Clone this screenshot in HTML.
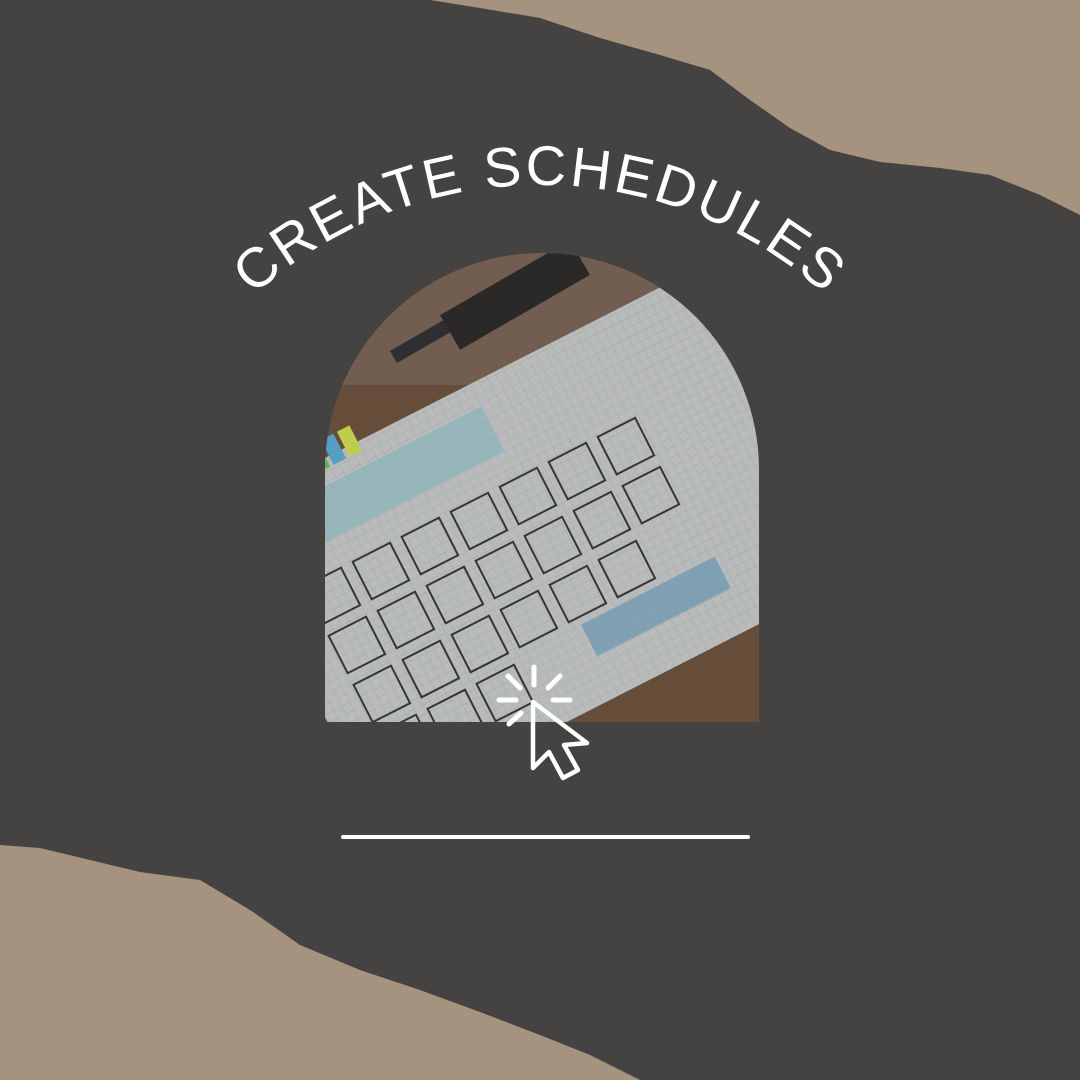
<!DOCTYPE html>
<html><head><meta charset="utf-8"><style>
html,body{margin:0;padding:0;background:#454341;}
svg{display:block}
</style></head><body>
<svg width="1080" height="1080" viewBox="0 0 1080 1080" xmlns="http://www.w3.org/2000/svg">
<defs>
<clipPath id="arch"><path d="M325 722 V470 A217 217 0 0 1 759 470 V722 Z"/></clipPath>
<pattern id="grid" width="9" height="9" patternUnits="userSpaceOnUse"><path d="M9 0V9H0" fill="none" stroke="#9aa6ab" stroke-width="0.7"/></pattern>
<path id="arc" d="M114 611 A426 426 0 0 1 966 611"/>
</defs>
<rect width="1080" height="1080" fill="#454341"/>
<path d="M430 0 H1080 V215 L1040 195 L990 175 L940 168 L880 162 L830 150 L790 128 L750 100 L710 70 L660 55 L600 38 L540 18 L480 8 Z" fill="#a5937f"/>
<path d="M0 845 L40 848 L90 860 L140 872 L200 880 L250 910 L300 945 L360 970 L420 990 L480 1012 L540 1035 L590 1055 L640 1080 H0 Z" fill="#a5937f"/>
<g clip-path="url(#arch)">
<rect x="320" y="245" width="445" height="485" fill="#6e5038"/>
<rect x="320" y="245" width="445" height="140" fill="#7d6554"/>
<g transform="rotate(-27 540 500)">
<rect x="250" y="365" width="580" height="345" fill="#d3d6d6"/>
<rect x="250" y="365" width="580" height="345" fill="url(#grid)" opacity="0.6"/>
<rect x="330" y="390" width="200" height="50" fill="#8fcbd6" opacity="0.6"/>
<g fill="none" stroke="#333" stroke-width="2">
<rect x="290" y="470" width="42" height="42"/><rect x="345" y="470" width="42" height="42"/><rect x="400" y="470" width="42" height="42"/><rect x="455" y="470" width="42" height="42"/><rect x="510" y="470" width="42" height="42"/><rect x="565" y="470" width="42" height="42"/><rect x="620" y="470" width="42" height="42"/>
<rect x="290" y="525" width="42" height="42"/><rect x="345" y="525" width="42" height="42"/><rect x="400" y="525" width="42" height="42"/><rect x="455" y="525" width="42" height="42"/><rect x="510" y="525" width="42" height="42"/><rect x="565" y="525" width="42" height="42"/><rect x="620" y="525" width="42" height="42"/>
<rect x="290" y="580" width="42" height="42"/><rect x="345" y="580" width="42" height="42"/><rect x="400" y="580" width="42" height="42"/><rect x="455" y="580" width="42" height="42"/><rect x="510" y="580" width="42" height="42"/><rect x="565" y="580" width="42" height="42"/>
<rect x="290" y="635" width="42" height="42"/><rect x="345" y="635" width="42" height="42"/><rect x="400" y="635" width="42" height="42"/>
</g>
<rect x="520" y="630" width="150" height="35" fill="#6fa8c8" opacity="0.7"/>
<rect x="300" y="347" width="14" height="28" fill="#d8e84a"/><rect x="318" y="347" width="14" height="28" fill="#f0823a"/><rect x="336" y="347" width="14" height="28" fill="#e8468c"/><rect x="354" y="347" width="14" height="28" fill="#5cd055"/><rect x="372" y="347" width="14" height="28" fill="#5ab4e0"/><rect x="390" y="347" width="14" height="28" fill="#d8ec50"/>
</g>
<rect x="380" y="300" width="200" height="14" fill="#2a2a30" transform="rotate(-30 480 307)"/>
<rect x="440" y="275" width="150" height="40" fill="#262422" transform="rotate(-30 515 295)"/>
<rect x="320" y="245" width="445" height="485" fill="#454341" opacity="0.18"/>
</g>
<text font-family="Liberation Sans, sans-serif" font-size="56" fill="#fff" letter-spacing="3"><textPath href="#arc" startOffset="50%" text-anchor="middle">CREATE SCHEDULES</textPath></text>
<g stroke="#fff" stroke-width="5" stroke-linecap="round" fill="none">
<line x1="534" y1="667" x2="534" y2="685"/>
<line x1="508" y1="676" x2="520" y2="688"/>
<line x1="560" y1="676" x2="548" y2="688"/>
<line x1="499" y1="700" x2="516" y2="700"/>
<line x1="553" y1="700" x2="570" y2="700"/>
<line x1="509" y1="724" x2="521" y2="713"/>
<path d="M533 702 L533 768 L549 752 L563 778 L578 770 L564 745 L587 743 Z" stroke-linejoin="round" stroke-width="4.5"/>
</g>
<line x1="343" y1="837" x2="748" y2="837" stroke="#fff" stroke-width="4" stroke-linecap="round"/>
</svg>
</body></html>
